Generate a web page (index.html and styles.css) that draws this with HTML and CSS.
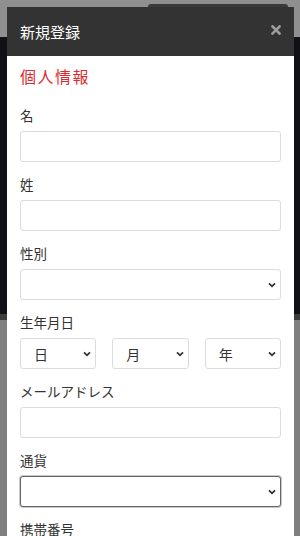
FILE: index.html
```html
<!DOCTYPE html>
<html lang="ja">
<head>
  <meta charset="UTF-8" />
  <meta name="viewport" content="width=device-width, initial-scale=1.0"/>
  <title>新規登録</title>
  <link rel="stylesheet" href="styles.css">
</head>
<body>

  <!-- page behind the modal -->
  <div class="page">
    <div class="topbar"><div class="tab"></div></div>
    <div class="hero"></div>
    <div class="band"></div>
    <div class="rest"></div>
  </div>

  <div class="modal">
    <div class="modal-head">
      <h1>新規登録</h1>
      <svg class="close" width="10" height="10" viewBox="0 0 10 10">
        <path d="M1.5 1.5 L8.5 8.5 M8.5 1.5 L1.5 8.5" stroke="#9c9c9c" stroke-width="2.6" stroke-linecap="square"/>
      </svg>
    </div>

    <form class="modal-body" id="regForm">
      <h2>個人情報</h2>

      <label for="first">名</label>
      <input type="text" id="first" />

      <label for="last">姓</label>
      <input type="text" id="last" />

      <label for="gender">性別</label>
      <div class="select-wrap">
        <select id="gender"><option></option></select>
        <svg class="chev" width="8" height="6" viewBox="0 0 8 6"><path d="M1 1.3 L4 4.3 L7 1.3" fill="none" stroke="#333" stroke-width="1.8"/></svg>
      </div>

      <label>生年月日</label>
      <div class="dob">
        <div class="select-wrap">
          <select><option>日</option></select>
          <svg class="chev" width="8" height="6" viewBox="0 0 8 6"><path d="M1 1.3 L4 4.3 L7 1.3" fill="none" stroke="#333" stroke-width="1.8"/></svg>
        </div>
        <div class="select-wrap">
          <select><option>月</option></select>
          <svg class="chev" width="8" height="6" viewBox="0 0 8 6"><path d="M1 1.3 L4 4.3 L7 1.3" fill="none" stroke="#333" stroke-width="1.8"/></svg>
        </div>
        <div class="select-wrap">
          <select><option>年</option></select>
          <svg class="chev" width="8" height="6" viewBox="0 0 8 6"><path d="M1 1.3 L4 4.3 L7 1.3" fill="none" stroke="#333" stroke-width="1.8"/></svg>
        </div>
      </div>

      <label for="email">メールアドレス</label>
      <input type="text" id="email" />

      <label for="currency">通貨</label>
      <div class="select-wrap">
        <select id="currency" class="focused"><option></option></select>
        <svg class="chev" width="8" height="6" viewBox="0 0 8 6"><path d="M1 1.3 L4 4.3 L7 1.3" fill="none" stroke="#333" stroke-width="1.8"/></svg>
      </div>

      <label for="phone">携帯番号</label>
      <input type="text" id="phone" />
    </form>
  </div>

</body>
</html>
```

FILE: styles.css
```css
html, body {
  margin: 0;
  height: 100%;
  overflow: hidden;
}

body {
  font-family: "Noto Sans CJK JP", "Noto Sans", sans-serif;
  background-color: #7e7e7e;
  position: relative;
}

.page {
  display: flex;
  flex-direction: column;
  height: 100%;
}

.topbar {
  height: 37px;
  background: #8f8f8f;
  display: flex;
}

.tab {
  margin: 4px 0 0 148px;
  width: 140px;
  background: #3a3a3a;
  border-radius: 3px 3px 0 0;
}

.hero {
  height: 277px;
  background: #111016;
}

.band {
  height: 6px;
  background: #3c3c3c;
}

.rest {
  flex: 1;
  background: #7f7f7f;
}

/* modal */
.modal {
  position: absolute;
  top: 7px;
  left: 7px;
  width: 287px;
  bottom: -40px;
  background: #fff;
}

.modal-head {
  height: 49px;
  background: #333;
  display: flex;
  align-items: center;
  justify-content: space-between;
  padding: 0 13px;
}

.modal-head h1 {
  margin: 0;
  color: #fff;
  font-size: 15px;
  font-weight: normal;
  line-height: 20px;
}

.close {
  margin-top: -3px;
}

.modal-body {
  padding: 8px 13px 0;
  display: flex;
  flex-direction: column;
}

.modal-body h2 {
  margin: 0 0 17px;
  color: #e02a30;
  font-size: 16px;
  font-weight: normal;
  letter-spacing: 1.5px;
  line-height: 24px;
}

label {
  font-size: 13.5px;
  color: #333;
  line-height: 20px;
  margin-bottom: 6px;
}

input, select {
  height: 31px;
  width: 100%;
  box-sizing: border-box;
  border: 1px solid #dcdcdc;
  border-radius: 3px;
  background: #fff;
  margin: 0 0 12px;
  font-family: inherit;
  font-size: 14px;
  color: #333;
  outline: none;
}

select {
  appearance: none;
  -webkit-appearance: none;
  padding: 0 22px 0 13px;
}

select.focused {
  border: 1px solid #666;
  box-shadow: 0 0 0 1px #c8c8c8;
}

.select-wrap {
  position: relative;
}

.chev {
  position: absolute;
  right: 5px;
  top: 13px;
  pointer-events: none;
}

.dob {
  display: grid;
  grid-template-columns: 1fr 1fr 1fr;
  column-gap: 16px;
}
```
